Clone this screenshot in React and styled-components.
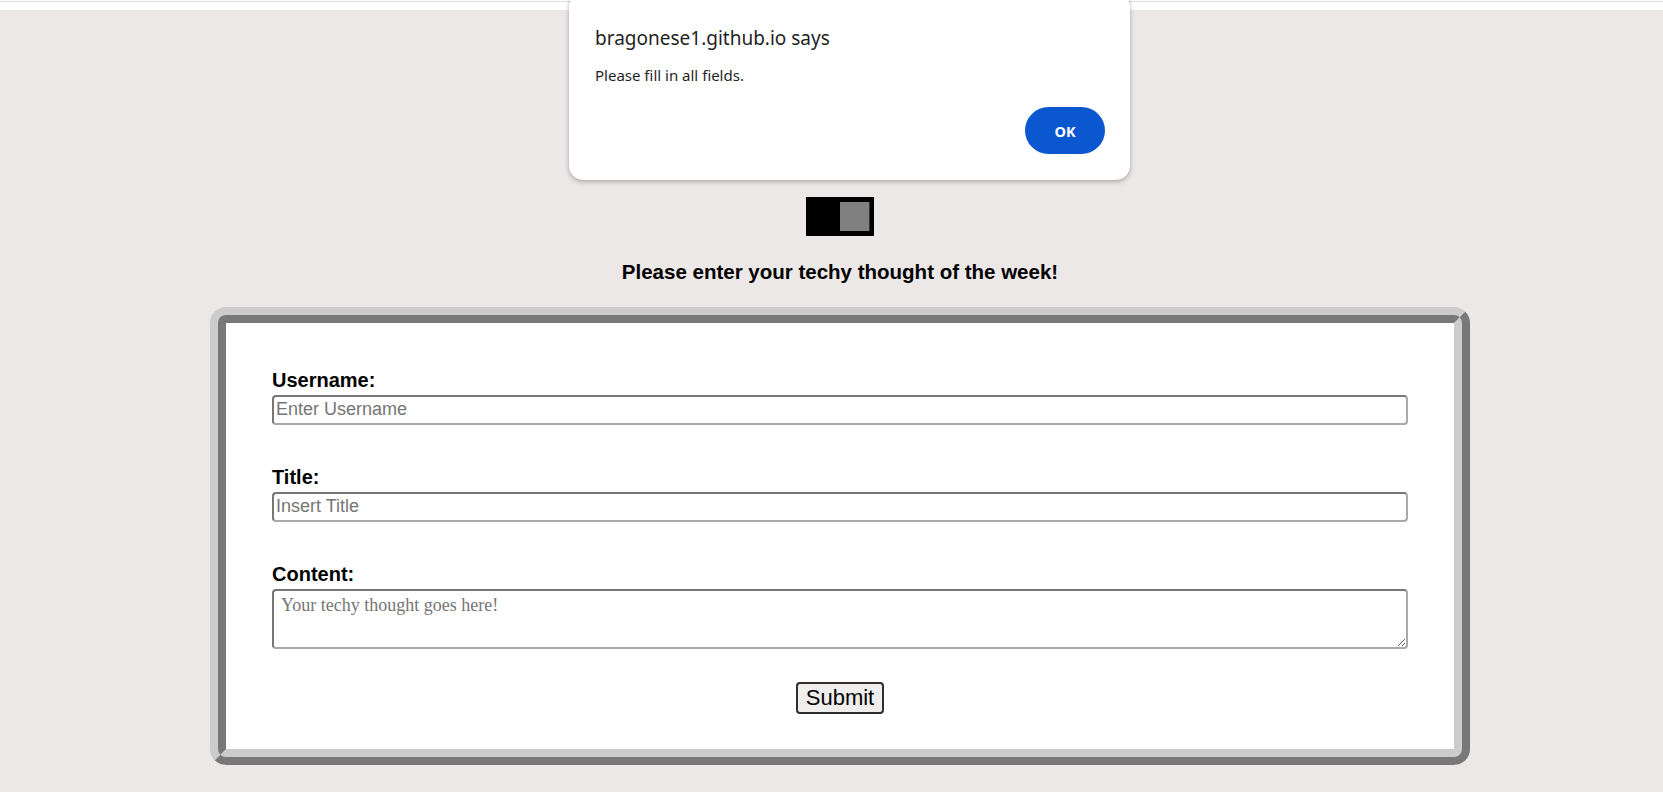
import React, { useState } from 'react';
import styled, { createGlobalStyle } from 'styled-components';

const GlobalStyle = createGlobalStyle`
  html, body {
    margin: 0;
    padding: 0;
    min-height: 100%;
    background: #ece8e7;
  }
  body {
    font-family: 'Liberation Sans', Arial, sans-serif;
    overflow: hidden;
  }
`;

const Page = styled.div`
  position: relative;
  min-height: 792px;
`;

const TopStrip = styled.div`
  height: 9px;
  background: #ffffff;
  border-top: 1px solid #ffffff;
  box-shadow: inset 0 1px 0 #dcdcdc;
`;

const Main = styled.main`
  display: flex;
  flex-direction: column;
  align-items: center;
  padding: 187px 0 0 17px;
`;

const ToggleTrack = styled.label`
  display: flex;
  justify-content: ${props => (props.on ? 'flex-end' : 'flex-start')};
  box-sizing: border-box;
  width: 68px;
  height: 39px;
  padding: 5px;
  background: #000000;
  cursor: pointer;
`;

const ToggleKnob = styled.span`
  width: 29px;
  height: 29px;
  background: #808080;
  box-shadow: 1px 0 0 #333333;
`;

const Heading = styled.h2`
  margin: 24px 0 23px;
  font-family: 'Liberation Sans', Arial, sans-serif;
  font-size: 20.5px;
  font-weight: 700;
  line-height: 23.5px;
  color: #000000;
`;

const Card = styled.form`
  box-sizing: border-box;
  width: 1260px;
  padding: 46px 46px 35px;
  background: #ffffff;
  border: 16px ridge #cccccc;
  border-radius: 16px;
  display: flex;
  flex-direction: column;
`;

const Field = styled.div`
  display: flex;
  flex-direction: column;
  margin-bottom: ${props => props.gap}px;
`;

const Label = styled.label`
  display: block;
  font-size: 20px;
  font-weight: 700;
  line-height: 23px;
  margin-bottom: 3px;
  color: #000000;
`;

const TextInput = styled.input`
  box-sizing: border-box;
  width: 100%;
  height: 30px;
  padding: 1px 2px;
  border: 2px solid;
  border-color: #777777 #aaaaaa #aaaaaa #777777;
  border-radius: 4px;
  font-family: 'Liberation Sans', Arial, sans-serif;
  font-size: 18px;
  outline: none;

  &::placeholder {
    color: #757575;
  }
`;

const TextArea = styled.textarea`
  box-sizing: border-box;
  width: 100%;
  height: 60px;
  padding: 4px 7px;
  border: 2px solid;
  border-color: #777777 #aaaaaa #aaaaaa #777777;
  border-radius: 4px;
  font-family: 'Liberation Serif', 'Times New Roman', serif;
  font-size: 18px;
  outline: none;

  &::placeholder {
    color: #757575;
  }
`;

const SubmitButton = styled.button`
  align-self: center;
  box-sizing: border-box;
  height: 32px;
  padding: 1px 8px;
  background: #f0eded;
  border: 2px solid #2e2e2e;
  border-radius: 4px;
  font-family: 'Liberation Sans', Arial, sans-serif;
  font-size: 22px;
  line-height: 26px;
  color: #000000;
  cursor: pointer;
`;

const Dialog = styled.div`
  position: absolute;
  top: -8px;
  left: 569px;
  box-sizing: border-box;
  width: 561px;
  height: 188px;
  padding: 33px 25px 0 26px;
  background: #ffffff;
  border-radius: 14px;
  box-shadow: 0 2px 5px rgba(0, 0, 0, 0.25), 0 0 1px rgba(0, 0, 0, 0.3);
  font-family: 'Noto Sans', 'Open Sans', sans-serif;
  color: #1f1f1f;
  display: flex;
  flex-direction: column;
`;

const DialogTitle = styled.div`
  font-size: 19px;
  line-height: 26px;
`;

const DialogMessage = styled.div`
  margin-top: 14px;
  font-size: 15px;
  line-height: 20px;
`;

const DialogActions = styled.div`
  display: flex;
  justify-content: flex-end;
  margin-top: 22px;
`;

const OkButton = styled.button`
  width: 80px;
  height: 47px;
  border: none;
  border-radius: 24px;
  background: #0b57d0;
  color: #ffffff;
  font-family: 'Noto Sans', 'Open Sans', sans-serif;
  font-size: 14.5px;
  font-weight: 700;
  cursor: pointer;
`;

const App = () => {
  const [on, setOn] = useState(true);

  const handleSubmit = e => {
    e.preventDefault();
  };

  return (
    <Page>
      <GlobalStyle />
      <TopStrip />
      <Main>
        <ToggleTrack on={on ? 1 : 0} onClick={() => setOn(!on)}>
          <ToggleKnob />
        </ToggleTrack>
        <Heading>Please enter your techy thought of the week!</Heading>
        <Card onSubmit={handleSubmit}>
          <Field gap={41}>
            <Label htmlFor="username">Username:</Label>
            <TextInput id="username" type="text" placeholder="Enter Username" />
          </Field>
          <Field gap={41}>
            <Label htmlFor="title">Title:</Label>
            <TextInput id="title" type="text" placeholder="Insert Title" />
          </Field>
          <Field gap={33}>
            <Label htmlFor="content">Content:</Label>
            <TextArea id="content" placeholder="Your techy thought goes here!" />
          </Field>
          <SubmitButton type="submit">Submit</SubmitButton>
        </Card>
      </Main>
      <Dialog role="alertdialog">
        <DialogTitle>bragonese1.github.io says</DialogTitle>
        <DialogMessage>Please fill in all fields.</DialogMessage>
        <DialogActions>
          <OkButton>OK</OkButton>
        </DialogActions>
      </Dialog>
    </Page>
  );
};

export default App;
